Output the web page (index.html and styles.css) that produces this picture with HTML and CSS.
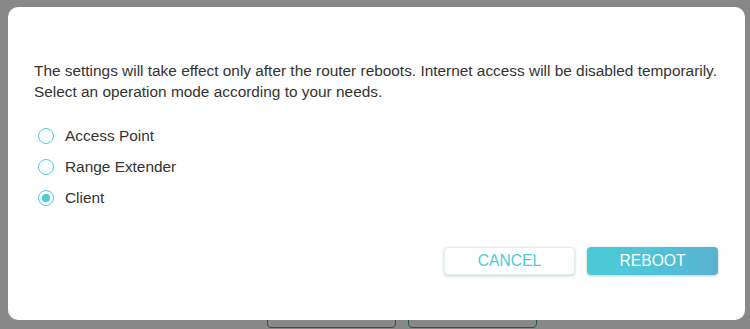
FILE: index.html
```html
<!DOCTYPE html>
<html>
<head>
<meta charset="utf-8">
<link rel="stylesheet" href="styles.css">
</head>
<body>
<div class="page">
  <div class="page-buttons">
    <span class="ghost-btn"></span>
    <span class="ghost-btn"></span>
  </div>
</div>
<div class="modal">
  <p class="msg">The settings will take effect only after the router reboots. Internet access will be disabled temporarily.<br>Select an operation mode according to your needs.</p>
  <ul class="modes">
    <li class="mode"><span class="radio"></span><span class="label">Access Point</span></li>
    <li class="mode"><span class="radio"></span><span class="label">Range Extender</span></li>
    <li class="mode"><span class="radio checked"></span><span class="label">Client</span></li>
  </ul>
  <div class="actions">
    <button class="btn btn-cancel">CANCEL</button>
    <button class="btn btn-reboot">REBOOT</button>
  </div>
</div>
</body>
</html>
```
FILE: styles.css
```css
html, body {
  margin: 0;
  padding: 0;
}
body {
  width: 750px;
  height: 329px;
  overflow: hidden;
  background: #888888;
  font-family: "Liberation Sans", Arial, sans-serif;
  position: relative;
}
.page {
  height: 329px;
  box-sizing: border-box;
  padding-top: 310px;
}
.page-buttons {
  display: flex;
  gap: 12px;
  margin-left: 267px;
}
.ghost-btn {
  display: block;
  width: 127px;
  height: 16px;
  border: 1.5px solid #2c5258;
  border-radius: 4px;
}
.modal {
  position: absolute;
  left: 8px;
  top: 7px;
  width: 737px;
  height: 313px;
  box-sizing: border-box;
  background: #ffffff;
  border-radius: 10px;
  padding: 53px 27px 0 26px;
  display: flex;
  flex-direction: column;
}
.msg {
  margin: 0;
  font-size: 15.4px;
  line-height: 21px;
  color: #333333;
}
.modes {
  list-style: none;
  margin: 18px 0 0 0;
  padding: 0;
  display: flex;
  flex-direction: column;
}
.mode {
  height: 31px;
  display: flex;
  align-items: center;
  padding-left: 4px;
}
.radio {
  width: 16px;
  height: 16px;
  box-sizing: border-box;
  border: 1.5px solid #4ecbd8;
  border-radius: 50%;
  margin-right: 11px;
  display: flex;
  align-items: center;
  justify-content: center;
}
.radio.checked::after {
  content: "";
  width: 8px;
  height: 8px;
  border-radius: 50%;
  background: #4ecbd8;
}
.label {
  font-size: 15.4px;
  color: #333333;
}
.actions {
  display: flex;
  justify-content: flex-end;
  gap: 12px;
  margin-top: 34px;
}
.btn {
  width: 131px;
  height: 28px;
  border-radius: 4px;
  font-family: "Liberation Sans", Arial, sans-serif;
  font-size: 15.6px;
  padding: 0;
  cursor: pointer;
}
.btn-cancel {
  background: #ffffff;
  color: #4ecbd8;
  border: 1px solid #e3edef;
  box-shadow: 0 1px 3px rgba(80, 130, 140, 0.35);
}
.btn-reboot {
  background: linear-gradient(90deg, #4ccbd6 0%, #4fc4d6 50%, #5ab1d0 100%);
  color: #ffffff;
  border: none;
  box-shadow: 0 1px 3px rgba(60, 110, 130, 0.35);
}
```
